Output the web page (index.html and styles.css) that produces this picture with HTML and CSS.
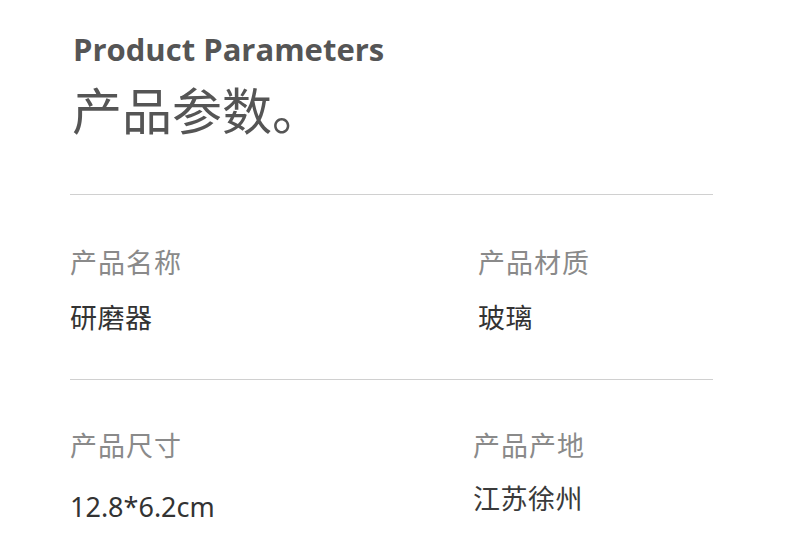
FILE: index.html
```html
<!DOCTYPE html>
<html lang="zh-CN">
<head>
<meta charset="utf-8">
<link rel="stylesheet" href="styles.css">
</head>
<body>
<main class="page">
  <header class="head">
    <h1 class="title-en">Product Parameters</h1>
    <h2 class="title-cn">产品参数。</h2>
  </header>
  <section class="row row-first">
    <div class="cell">
      <div class="label">产品名称</div>
      <div class="value">研磨器</div>
    </div>
    <div class="cell">
      <div class="label">产品材质</div>
      <div class="value">玻璃</div>
    </div>
  </section>
  <section class="row row-second">
    <div class="cell">
      <div class="label">产品尺寸</div>
      <div class="value value-num">12.8*6.2cm</div>
    </div>
    <div class="cell cell-shift">
      <div class="label">产品产地</div>
      <div class="value value-tight">江苏徐州</div>
    </div>
  </section>
</main>
</body>
</html>
```

FILE: styles.css
```css
html, body {
  margin: 0;
  padding: 0;
  background: #ffffff;
}
.page {
  width: 643px;
  margin-left: 70px;
  font-family: "Noto Sans CJK SC", "Noto Sans", sans-serif;
}
.head {
  padding-left: 3px;
  padding-top: 29px;
  height: 194px;
  box-sizing: border-box;
}
.title-en {
  margin: 0;
  font-family: "Open Sans", "Noto Sans", sans-serif;
  font-weight: 700;
  font-size: 31px;
  line-height: 40px;
  color: #555555;
  letter-spacing: 0;
}
.title-cn {
  margin: 10px 0 0 -1px;
  font-weight: 400;
  font-size: 50px;
  line-height: 58px;
  color: #555555;
  letter-spacing: 0;
}
.row {
  display: grid;
  grid-template-columns: 408px 1fr;
  border-top: 1px solid #d0d0d0;
  box-sizing: border-box;
}
.row-first {
  height: 185px;
  padding-top: 51px;
}
.row-second {
  padding-top: 49px;
}
.label {
  font-size: 27px;
  line-height: 32px;
  color: #8a8a8a;
  letter-spacing: 1px;
}
.value {
  margin-top: 23px;
  font-size: 27px;
  line-height: 32px;
  color: #333333;
  letter-spacing: 0.5px;
}
.value-num {
  font-family: "Noto Sans", "Noto Sans CJK SC", sans-serif;
  letter-spacing: 0;
  margin-top: 30px;
}
.cell-shift {
  margin-left: -5px;
}
.value-tight {
  margin-top: 21px;
  color: #3a3a3a;
}
```
